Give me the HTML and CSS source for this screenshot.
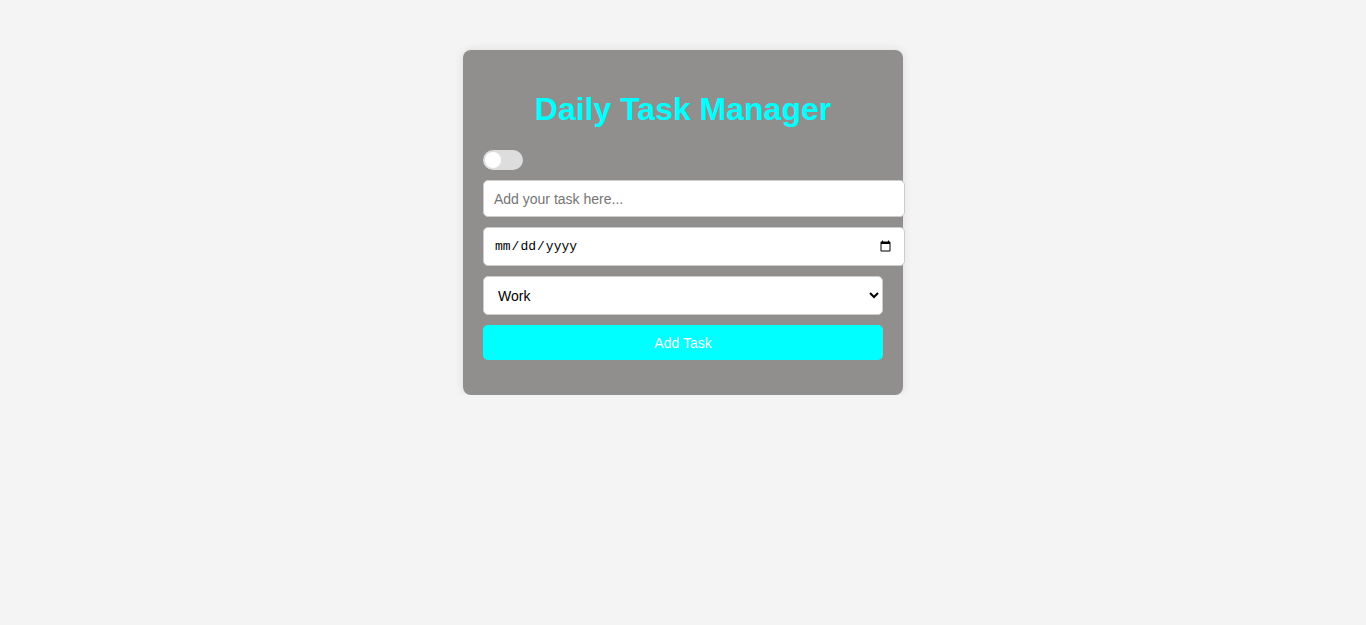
FILE: index.html
```html
<!DOCTYPE html>
<html lang="en">
<head>
<meta charset="UTF-8">
<title>Daily Task Manager</title>
<link rel="stylesheet" href="styles.css">
</head>
<body>
<div class="container">
  <h1 class="title">Daily Task Manager</h1>
  <label class="switch">
    <input type="checkbox" class="switch-input">
    <span class="slider"></span>
  </label>
  <input type="text" class="task-input" placeholder="Add your task here...">
  <input type="date" class="date-input">
  <select class="category">
    <option>Work</option>
    <option>Personal</option>
    <option>Shopping</option>
  </select>
  <button class="add-btn">Add Task</button>
  <ul class="task-list"></ul>
</div>
</body>
</html>
```
FILE: styles.css
```css
body {
  margin: 0;
  padding: 50px 0 0;
  background: #f4f4f4;
  font-family: "Liberation Sans", Arial, sans-serif;
}
.container {
  width: 400px;
  margin: 0 auto;
  padding: 20px;
  background: #918f8d;
  border-radius: 8px;
  box-shadow: 0 0 10px rgba(0, 0, 0, 0.1);
}
.title {
  margin: 21px 0 22px;
  text-align: center;
  color: #00ffff;
  font-size: 32px;
  line-height: 37px;
}
.switch {
  display: block;
  position: relative;
  width: 40px;
  height: 20px;
  margin-bottom: 10px;
}
.switch-input {
  opacity: 0;
  width: 0;
  height: 0;
  margin: 0;
}
.slider {
  position: absolute;
  inset: 0;
  background: #dddddd;
  border-radius: 10px;
}
.slider::before {
  content: "";
  position: absolute;
  left: 2px;
  top: 2px;
  width: 16px;
  height: 16px;
  border-radius: 50%;
  background: #ffffff;
}
.task-input,
.date-input {
  display: block;
  width: 100%;
  padding: 10px;
  margin: 0 0 10px;
  border: 1px solid #cccccc;
  border-radius: 5px;
  font-size: 14px;
  font-family: "Liberation Sans", Arial, sans-serif;
  background: #ffffff;
}
.task-input {
  height: 15px;
}
.date-input {
  font-family: "Liberation Mono", monospace;
  height: 17px;
  font-size: 13px;
  margin-bottom: 10px;
}
.task-input::placeholder {
  color: #757575;
}
.category {
  display: block;
  width: 100%;
  height: 39px;
  padding: 0 10px;
  margin: 0 0 10px;
  border: 1px solid #cccccc;
  border-radius: 5px;
  font-size: 14px;
  font-family: "Liberation Sans", Arial, sans-serif;
  background: #ffffff;
  color: #000;
}
.add-btn {
  display: block;
  width: 100%;
  height: 35px;
  border: none;
  border-radius: 5px;
  background: #00ffff;
  color: #ffffff;
  font-size: 14px;
  font-family: "Liberation Sans", Arial, sans-serif;
  cursor: pointer;
}
.task-list {
  list-style: none;
  margin: 15px 0 0;
  padding: 0;
}
```
